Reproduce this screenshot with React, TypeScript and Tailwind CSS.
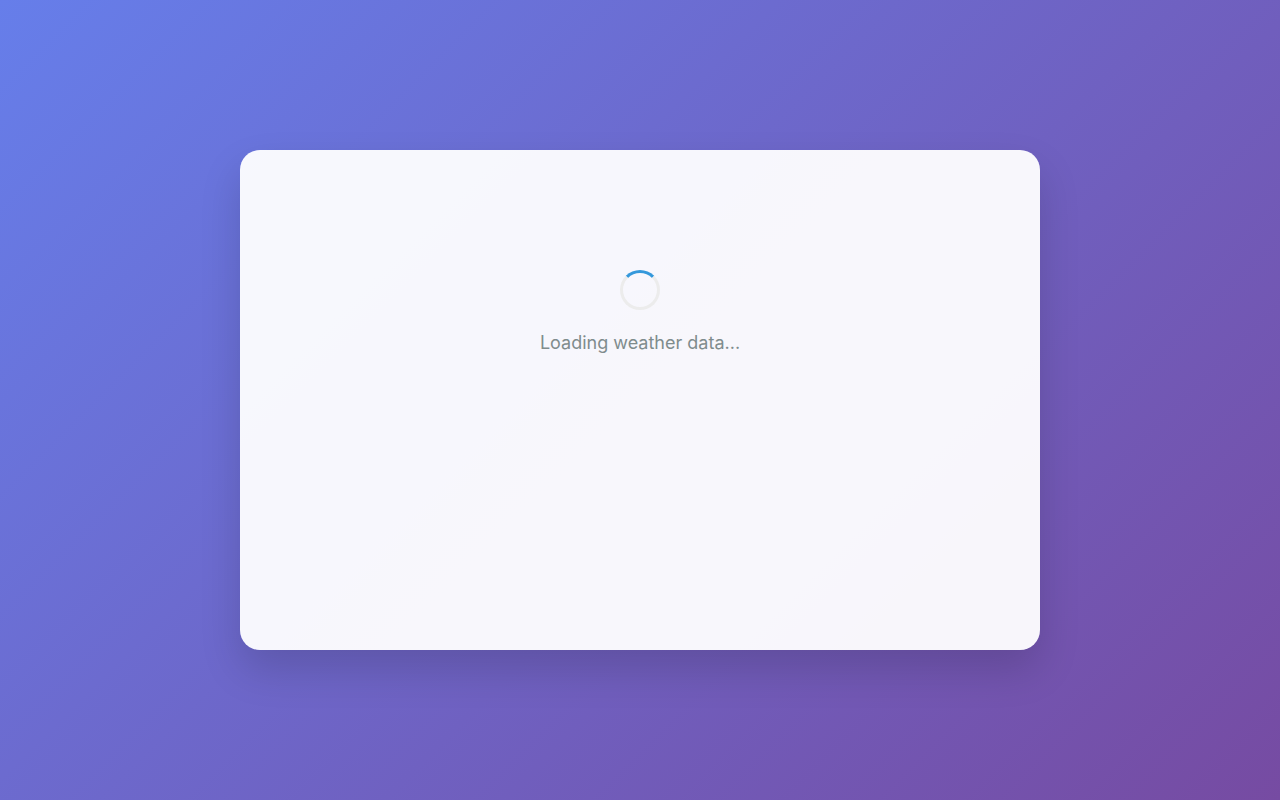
import React from 'react';

export default function App() {
    return (
        <div
            className="flex min-h-screen w-full items-center justify-center bg-[linear-gradient(135deg,#667eea_0%,#764ba2_100%)]"
            style={{ fontFamily: 'Inter, "Noto Sans", "Liberation Sans", sans-serif' }}
        >
            {/* Card */}
            <div className="h-[500px] w-[800px] rounded-[20px] bg-white/95 p-10 shadow-[0_20px_40px_rgba(0,0,0,0.15)]">
                <div className="flex flex-col items-center pt-20">
                    {/* Spinner */}
                    <div className="mb-5 h-10 w-10 rounded-full border-[3px] border-[#ececec] border-t-[#3498db]" />
                    <p className="text-[18px] leading-[25px] text-[#7f8c8d]">Loading weather data...</p>
                </div>
            </div>
        </div>
    );
}
